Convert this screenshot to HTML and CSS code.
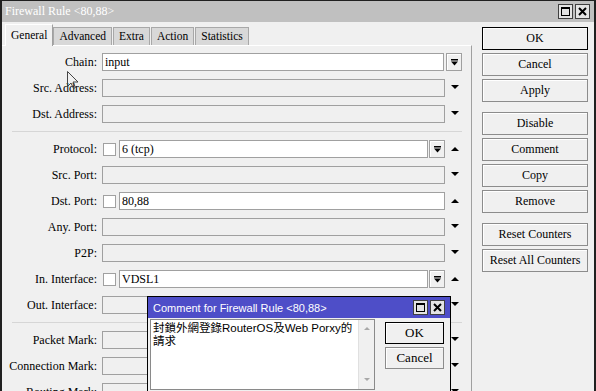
FILE: index.html
```html
<!DOCTYPE html>
<html lang="zh-Hant">
<head>
    <meta charset="UTF-8">
    <meta name="viewport" content="width=device-width, initial-scale=1.0">
    <title>Firewall Rule &lt;80,88&gt;</title>
    <link rel="stylesheet" href="styles.css">
</head>
<body>
<div class="window">
    <div class="titlebar">
        <span class="title">Firewall Rule &lt;80,88&gt;</span>
        <div class="title-buttons">
            <span class="tbtn"><svg width="11" height="11" viewBox="0 0 11 11"><rect x="1.5" y="1.5" width="8" height="8" fill="none" stroke="#000"/><rect x="1" y="1" width="9" height="2" fill="#000"/></svg></span>
            <span class="tbtn"><svg width="11" height="11" viewBox="0 0 11 11"><path d="M2 2 L9 9 M9 2 L2 9" stroke="#000" stroke-width="2"/></svg></span>
        </div>
    </div>

    <div class="main">
        <div class="left">
            <ul class="tabs">
                <li class="tab active">General</li>
                <li class="tab">Advanced</li>
                <li class="tab">Extra</li>
                <li class="tab">Action</li>
                <li class="tab">Statistics</li>
            </ul>

            <div class="panel">
                <div class="row">
                    <label>Chain:</label>
                    <div class="field wide">
                        <div class="input">input</div>
                        <span class="dd"><svg width="7" height="7" viewBox="0 0 7 7"><rect x="0" y="0" width="7" height="1.5" fill="#000"/><path d="M0 2.5 H7 L3.5 6.5 Z" fill="#000"/></svg></span>
                    </div>
                </div>
                <div class="row">
                    <label>Src. Address:</label>
                    <div class="field"><div class="input off"></div></div>
                    <span class="arrow down"></span>
                </div>
                <div class="row">
                    <label>Dst. Address:</label>
                    <div class="field"><div class="input off"></div></div>
                    <span class="arrow down"></span>
                </div>

                <div class="sep"></div>

                <div class="row">
                    <label>Protocol:</label>
                    <div class="field">
                        <span class="check"></span>
                        <div class="input">6 (tcp)</div>
                        <span class="dd"><svg width="7" height="7" viewBox="0 0 7 7"><rect x="0" y="0" width="7" height="1.5" fill="#000"/><path d="M0 2.5 H7 L3.5 6.5 Z" fill="#000"/></svg></span>
                    </div>
                    <span class="arrow up"></span>
                </div>
                <div class="row">
                    <label>Src. Port:</label>
                    <div class="field"><div class="input off"></div></div>
                    <span class="arrow down"></span>
                </div>
                <div class="row">
                    <label>Dst. Port:</label>
                    <div class="field">
                        <span class="check"></span>
                        <div class="input">80,88</div>
                    </div>
                    <span class="arrow up"></span>
                </div>
                <div class="row">
                    <label>Any. Port:</label>
                    <div class="field"><div class="input off"></div></div>
                    <span class="arrow down"></span>
                </div>
                <div class="row">
                    <label>P2P:</label>
                    <div class="field"><div class="input off"></div></div>
                    <span class="arrow down"></span>
                </div>
                <div class="row">
                    <label>In. Interface:</label>
                    <div class="field">
                        <span class="check"></span>
                        <div class="input">VDSL1</div>
                        <span class="dd"><svg width="7" height="7" viewBox="0 0 7 7"><rect x="0" y="0" width="7" height="1.5" fill="#000"/><path d="M0 2.5 H7 L3.5 6.5 Z" fill="#000"/></svg></span>
                    </div>
                    <span class="arrow up"></span>
                </div>
                <div class="row">
                    <label>Out. Interface:</label>
                    <div class="field"><div class="input off"></div></div>
                    <span class="arrow down"></span>
                </div>

                <div class="sep"></div>

                <div class="row">
                    <label>Packet Mark:</label>
                    <div class="field"><div class="input off"></div></div>
                    <span class="arrow down"></span>
                </div>
                <div class="row">
                    <label>Connection Mark:</label>
                    <div class="field"><div class="input off"></div></div>
                    <span class="arrow down"></span>
                </div>
                <div class="row">
                    <label>Routing Mark:</label>
                    <div class="field"><div class="input off"></div></div>
                    <span class="arrow down"></span>
                </div>
            </div>
        </div>

        <div class="actions">
            <div class="btn default">OK</div>
            <div class="btn">Cancel</div>
            <div class="btn">Apply</div>
            <div class="btn group">Disable</div>
            <div class="btn">Comment</div>
            <div class="btn">Copy</div>
            <div class="btn">Remove</div>
            <div class="btn group">Reset Counters</div>
            <div class="btn">Reset All Counters</div>
        </div>
    </div>

    <!-- comment dialog on top of the rule window -->
    <div class="dialog">
        <div class="dialog-title">
            <span>Comment for Firewall Rule &lt;80,88&gt;</span>
            <div class="title-buttons">
                <span class="tbtn"><svg width="11" height="11" viewBox="0 0 11 11"><rect x="1.5" y="1.5" width="8" height="8" fill="none" stroke="#000"/><rect x="1" y="1" width="9" height="2" fill="#000"/></svg></span>
                <span class="tbtn"><svg width="11" height="11" viewBox="0 0 11 11"><path d="M2 2 L9 9 M9 2 L2 9" stroke="#000" stroke-width="2"/></svg></span>
            </div>
        </div>
        <div class="dialog-body">
            <div class="memo">
                <div class="memo-text">封鎖外網登錄RouterOS及Web Porxy的<br>請求</div>
                <div class="scroll">
                    <span class="sarrow up"></span>
                    <span class="sarrow down"></span>
                </div>
            </div>
            <div class="dialog-buttons">
                <div class="btn default">OK</div>
                <div class="btn">Cancel</div>
            </div>
        </div>
    </div>

    <svg class="cursor" width="13" height="19" viewBox="0 0 13 19"><path d="M0.5 0.5 L0.5 15.5 L4 12 L6.5 17.5 L8.5 16.5 L6 11 L11 11 Z" fill="none" stroke="#444"/></svg>
</div>
</body>
</html>
```

FILE: styles.css
```css
body {
    margin: 0;
    background-color: #f0f0f0;
    font-family: "Liberation Serif", "Noto Sans CJK TC", serif;
    font-size: 12px;
    color: #000;
}

.window {
    position: relative;
    width: 592px;
    height: 390px;
    border-left: 2px solid #202020;
    border-right: 2px solid #202020;
    border-top: 1px solid #202020;
    background-color: #f0f0f0;
    overflow: hidden;
}

.titlebar {
    display: flex;
    align-items: center;
    justify-content: space-between;
    height: 21px;
    padding: 0 4px 0 3px;
    background-color: #c0c0c0;
    color: #fff;
    font-size: 12px;
}

.title-buttons {
    display: flex;
    gap: 2px;
}

.tbtn {
    display: flex;
    align-items: center;
    justify-content: center;
    width: 13px;
    height: 13px;
    border: 1px solid #404040;
    background-color: #e4e4e4;
}

.main {
    display: flex;
}

.left {
    width: 470px;
}

.tabs {
    display: flex;
    align-items: flex-end;
    list-style-type: none;
    margin: 0;
    padding: 0 0 0 3px;
    height: 23px;
}

.tab {
    height: 17px;
    line-height: 17px;
    padding: 0 5px;
    margin-right: 1px;
    background-color: #d8d8d8;
    border: 1px solid #a8a8a8;
    border-bottom: none;
    font-size: 11.5px;
}

.tab.active {
    height: 21px;
    line-height: 20px;
    margin-bottom: -1px;
    margin-right: 0;
    padding: 0 5px;
    background-color: #f0f0f0;
    border-color: #fff #a0a0a0 #f0f0f0 #fff;
    position: relative;
}

.panel {
    height: 400px;
    padding-top: 7px;
    border-top: 1px solid #fff;
    border-right: 1px solid #a0a0a0;
}

.row {
    display: flex;
    align-items: center;
    height: 18px;
    margin-bottom: 8px;
}

.row label {
    width: 95px;
    text-align: right;
    margin-right: 5px;
    white-space: nowrap;
}

.field {
    display: flex;
    align-items: center;
    width: 343px;
    height: 18px;
}

.field.wide {
    width: 360px;
}

.input {
    flex: 1;
    height: 16px;
    line-height: 16px;
    padding-left: 2px;
    border: 1px solid #a0a0a0;
    background-color: #fff;
    white-space: nowrap;
}

.input.off {
    background-color: #f0f0f0;
}

.check {
    width: 11px;
    height: 11px;
    margin: 0 3px 0 1px;
    border: 1px solid #a0a0a0;
    background-color: #fff;
}

.dd {
    display: flex;
    align-items: center;
    justify-content: center;
    width: 14px;
    height: 16px;
    margin-left: 1px;
    border: 1px solid #a0a0a0;
    box-shadow: inset 1px 1px 0 #fff;
    background-color: #f0f0f0;
}

.field.wide .dd {
    margin-left: 2px;
}

.arrow {
    width: 0;
    height: 0;
    margin-left: 6px;
    border-left: 4px solid transparent;
    border-right: 4px solid transparent;
}

.arrow.down {
    border-top: 4px solid #000;
    margin-top: -2px;
}

.arrow.up {
    border-bottom: 4px solid #000;
}

.sep {
    width: 450px;
    height: 1px;
    margin: 1px 0 8px 10px;
    background-color: #d6d6d6;
}

.actions {
    display: flex;
    flex-direction: column;
    padding: 5px 0 0 10px;
}

.btn {
    width: 104px;
    height: 21px;
    line-height: 21px;
    margin-bottom: 3px;
    text-align: center;
    border: 1px solid #8c8c8c;
    box-shadow: inset 1px 1px 0 #fff;
    background-color: #f0f0f0;
    white-space: nowrap;
}

.btn.default {
    border-color: #000;
}

.btn.group {
    margin-top: 7px;
}

.dialog {
    position: absolute;
    left: 145px;
    top: 295px;
    width: 302px;
    height: 100px;
    border: 1px solid #000;
    background-color: #f0f0f0;
}

.dialog-title {
    display: flex;
    align-items: center;
    justify-content: space-between;
    height: 21px;
    padding: 0 5px 0 5px;
    background-color: #4e4ec8;
    color: #fff;
    font-family: "Liberation Sans", sans-serif;
    font-size: 11px;
}

.dialog-body {
    display: flex;
    padding: 1px 0 0 2px;
}

.memo {
    display: flex;
    width: 223px;
    height: 69px;
    border: 1px solid #8a8a8a;
    background-color: #fff;
}

.memo-text {
    flex: 1;
    padding: 2px 2px;
    font-family: "Liberation Sans", "Noto Sans CJK TC", sans-serif;
    font-size: 11.5px;
    line-height: 13px;
    white-space: nowrap;
}

.scroll {
    display: flex;
    flex-direction: column;
    justify-content: space-between;
    align-items: center;
    width: 15px;
    padding: 7px 0 8px;
    background-color: #f0f0f0;
    border-left: 1px solid #e0e0e0;
}

.sarrow {
    width: 0;
    height: 0;
    border-left: 3px solid transparent;
    border-right: 3px solid transparent;
}

.sarrow.up {
    border-bottom: 3px solid #a8a8a8;
}

.sarrow.down {
    border-top: 3px solid #a8a8a8;
}

.dialog-buttons {
    display: flex;
    flex-direction: column;
    padding: 3px 0 0 10px;
}

.dialog-buttons .btn {
    width: 57px;
    height: 20px;
    line-height: 20px;
    font-size: 13px;
}

.cursor {
    position: absolute;
    left: 65px;
    top: 70px;
}
```
